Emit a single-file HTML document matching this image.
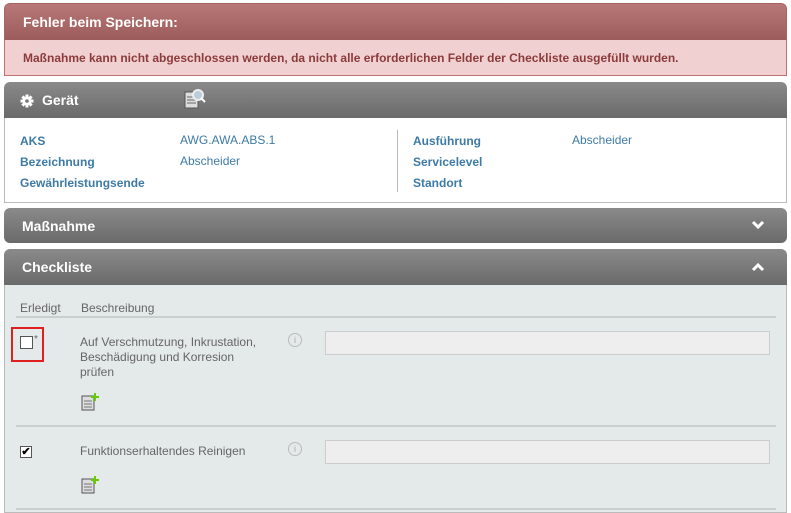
<html><head><style>
body{margin:0;width:791px;height:512px;overflow:hidden;background:#fff;font-family:"Liberation Sans",Arial,sans-serif;font-size:12px;position:relative}
.a{position:absolute}
.hdr{background:linear-gradient(#8a8a8a,#6a6a6a);border-radius:6px 6px 0 0;color:#fff;font-weight:bold;font-size:14px}
.lbl{color:#3d7aa6;font-weight:bold}
.val{color:#3d7aa6}
.g{color:#666}
.inp{background:#eee;border:1px solid #ccc;width:443px;height:22px}
.line{height:2px;background:#c9cece}
</style></head><body>
<div class="a" style="left:4px;top:3px;width:781px;height:37px;border-radius:6px 6px 0 0;background:linear-gradient(#b87878,#9c5b5b);border:1px solid #a86464;border-bottom:none"></div>
<div class="a" style="left:23px;top:14px;color:#fff;font-weight:bold;font-size:14px">Fehler beim Speichern:</div>
<div class="a" style="left:4px;top:40px;width:781px;height:35px;background:#f1d0d1;border:1px solid #c07070;border-top:none"></div>
<div class="a" style="left:23px;top:51px;color:#8b3b3b;font-weight:bold;font-size:12px">Maßnahme kann nicht abgeschlossen werden, da nicht alle erforderlichen Felder der Checkliste ausgefüllt wurden.</div>

<div class="a hdr" style="left:4px;top:82px;width:783px;height:36px"></div>
<svg class="a" style="left:20px;top:94px" width="14" height="14" viewBox="0 0 14 14"><g fill="#fff"><circle cx="7" cy="7" r="4.5"/><rect x="5.5" y="0.5" width="3" height="13"/><rect x="0.5" y="5.5" width="13" height="3"/><rect x="5.5" y="0.5" width="3" height="13" transform="rotate(45 7 7)"/><rect x="5.5" y="0.5" width="3" height="13" transform="rotate(-45 7 7)"/></g><circle cx="7" cy="7" r="1.8" fill="#777"/></svg>
<div class="a" style="left:42px;top:92px;color:#fff;font-weight:bold;font-size:14px">Gerät</div>
<svg class="a" style="left:184px;top:88px" width="22" height="22"><rect x="1" y="4" width="13" height="16" fill="#ddd" stroke="#555"/><path d="M3 9h9M3 12h9M3 15h9" stroke="#666"/><circle cx="14" cy="7" r="5" fill="#bcd" stroke="#eee" stroke-width="2"/><path d="M17 10l4 4" stroke="#fff" stroke-width="2"/></svg>
<div class="a" style="left:4px;top:118px;width:781px;height:84px;border:1px solid #bbb;border-top:none;background:#fff"></div>
<div class="a" style="left:397px;top:130px;width:1px;height:62px;background:#bbb"></div>
<div class="a lbl" style="left:20px;top:134px">AKS</div>
<div class="a lbl" style="left:20px;top:155px">Bezeichnung</div>
<div class="a lbl" style="left:20px;top:176px">Gewährleistungsende</div>
<div class="a val" style="left:180px;top:133px">AWG.AWA.ABS.1</div>
<div class="a val" style="left:180px;top:154px">Abscheider</div>
<div class="a lbl" style="left:413px;top:134px">Ausführung</div>
<div class="a lbl" style="left:413px;top:155px">Servicelevel</div>
<div class="a lbl" style="left:413px;top:176px">Standort</div>
<div class="a val" style="left:572px;top:133px">Abscheider</div>

<div class="a hdr" style="left:4px;top:208px;width:783px;height:35px;border-radius:6px"></div>
<div class="a" style="left:22px;top:218px;color:#fff;font-weight:bold;font-size:14px">Maßnahme</div>
<svg class="a" style="left:751px;top:220px" width="14" height="10"><path d="M2 2l5 5 5-5" stroke="#fff" stroke-width="3" fill="none"/></svg>

<div class="a hdr" style="left:4px;top:249px;width:783px;height:36px"></div>
<div class="a" style="left:22px;top:259px;color:#fff;font-weight:bold;font-size:14px">Checkliste</div>
<svg class="a" style="left:751px;top:262px" width="14" height="10"><path d="M2 8l5-5 5 5" stroke="#fff" stroke-width="3" fill="none"/></svg>
<div class="a" style="left:4px;top:285px;width:781px;height:227px;background:#e4e9e9;border:1px solid #bbb;border-top:none"></div>
<div class="a g" style="left:20px;top:301px">Erledigt</div>
<div class="a g" style="left:81px;top:301px">Beschreibung</div>
<div class="a line" style="left:16px;top:316px;width:760px"></div>
<div class="a" style="left:11px;top:327px;width:33px;height:35px;border:2px solid #e02020;box-sizing:border-box"></div>
<div class="a" style="left:20px;top:336px;width:13px;height:13px;border:1px solid #555;background:#fff;box-sizing:border-box"></div>
<div class="a g" style="left:34px;top:334px;font-size:10px">*</div>
<div class="a g" style="left:80px;top:335px;line-height:15px">Auf Verschmutzung, Inkrustation,<br>Beschädigung und Korresion<br>prüfen</div>
<div class="a" style="left:288px;top:333px;width:12px;height:12px;border-radius:50%;border:1px solid #bbb;color:#aaa;font-size:9px;text-align:center;line-height:12px">i</div>
<div class="a inp" style="left:325px;top:331px"></div>
<svg class="a" style="left:81px;top:392px" width="18" height="20"><rect x="1" y="4" width="12" height="14" fill="#ddd" stroke="#555"/><path d="M3 9h8M3 12h8M3 15h8" stroke="#777"/><path d="M14 1v8M10 5h8" stroke="#6c0" stroke-width="2"/></svg>
<div class="a line" style="left:16px;top:425px;width:760px"></div>
<div class="a" style="left:20px;top:446px;width:12px;height:12px;border:1px solid #555;background:#fff;box-sizing:border-box;font-size:11px;line-height:10px;text-align:center;font-weight:bold">✔</div>
<div class="a g" style="left:80px;top:444px">Funktionserhaltendes Reinigen</div>
<div class="a" style="left:288px;top:442px;width:12px;height:12px;border-radius:50%;border:1px solid #bbb;color:#aaa;font-size:9px;text-align:center;line-height:12px">i</div>
<div class="a inp" style="left:325px;top:440px"></div>
<svg class="a" style="left:81px;top:475px" width="18" height="20"><rect x="1" y="4" width="12" height="14" fill="#ddd" stroke="#555"/><path d="M3 9h8M3 12h8M3 15h8" stroke="#777"/><path d="M14 1v8M10 5h8" stroke="#6c0" stroke-width="2"/></svg>
<div class="a line" style="left:16px;top:508px;width:760px"></div>
</body></html>
